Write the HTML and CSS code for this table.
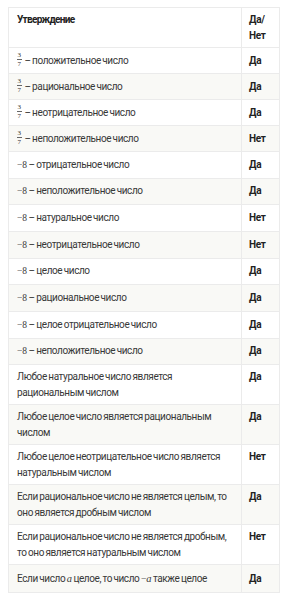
FILE: index.html
```html
<!DOCTYPE html>
<html lang="ru">
<head>
<meta charset="utf-8">
<link rel="stylesheet" href="styles.css">
</head>
<body>
<table class="tbl">
  <colgroup><col class="col1"><col class="col2"></colgroup>
  <thead>
    <tr class="head"><th>Утверждение</th><th class="c2">Да/<br>Нет</th></tr>
  </thead>
  <tbody>
    <tr class="rf"><td><span class="frac"><span class="num">3</span><span class="den">7</span></span> – положительное число</td><td class="c2">Да</td></tr>
    <tr class="rf"><td><span class="frac"><span class="num">3</span><span class="den">7</span></span> – рациональное число</td><td class="c2">Да</td></tr>
    <tr class="rf"><td><span class="frac"><span class="num">3</span><span class="den">7</span></span> – неотрицательное число</td><td class="c2">Да</td></tr>
    <tr class="rf"><td><span class="frac"><span class="num">3</span><span class="den">7</span></span> – неположительное число</td><td class="c2">Нет</td></tr>
    <tr class="rm"><td><span class="m">−8</span> – отрицательное число</td><td class="c2">Да</td></tr>
    <tr class="rm"><td><span class="m">−8</span> – неположительное число</td><td class="c2">Да</td></tr>
    <tr class="rm"><td><span class="m">−8</span> – натуральное число</td><td class="c2">Нет</td></tr>
    <tr class="rm"><td><span class="m">−8</span> – неотрицательное число</td><td class="c2">Нет</td></tr>
    <tr class="rm"><td><span class="m">−8</span> – целое число</td><td class="c2">Да</td></tr>
    <tr class="rm"><td><span class="m">−8</span> – рациональное число</td><td class="c2">Да</td></tr>
    <tr class="rm"><td><span class="m">−8</span> – целое отрицательное число</td><td class="c2">Да</td></tr>
    <tr class="rm"><td><span class="m">−8</span> – неположительное число</td><td class="c2">Да</td></tr>
    <tr class="rd"><td>Любое натуральное число является<br>рациональным числом</td><td class="c2">Да</td></tr>
    <tr class="rd"><td>Любое целое число является рациональным<br>числом</td><td class="c2">Да</td></tr>
    <tr class="rd"><td>Любое целое неотрицательное число является<br>натуральным числом</td><td class="c2">Нет</td></tr>
    <tr class="rd"><td>Если рациональное число не является целым, то<br>оно является дробным числом</td><td class="c2">Да</td></tr>
    <tr class="rd"><td>Если рациональное число не является дробным,<br>то оно является натуральным числом</td><td class="c2">Нет</td></tr>
    <tr class="rl"><td>Если число <span class="mi">a</span> целое, то число <span class="m">−<span class="mi">a</span></span> также целое</td><td class="c2">Да</td></tr>
  </tbody>
</table>
</body>
</html>
```

FILE: styles.css
```css
html, body {
  margin: 0;
  padding: 0;
  background: #ffffff;
}
body {
  padding: 7px 8px;
  font-family: Roboto, "Liberation Sans", Arial, sans-serif;
  font-size: 10px;
  line-height: 16px;
  letter-spacing: -0.4px;
  word-spacing: -0.6px;
  color: #383838;
}
.tbl {
  width: 272px;
  border-collapse: collapse;
  table-layout: fixed;
}
.col2 { width: 38px; }
.tbl th, .tbl td {
  border: 1px solid #ebebeb;
  padding: 4px 4px 3px 8px;
  text-align: left;
  vertical-align: top;
  white-space: nowrap;
}
.tbl th {
  font-weight: 700;
  color: #222222;
  letter-spacing: -0.7px;
}
.tbl .c2 {
  padding-left: 7px;
  padding-right: 2px;
  font-weight: 700;
  color: #222222;
  letter-spacing: -0.3px;
}
.head { height: 40px; }
.rf { height: 26px; }
.rm { height: 26.67px; }
.rd { height: 40px; }
.rl { height: 28px; }
.rf td, .rm td, .rl td {
  vertical-align: middle;
  padding-top: 0;
  padding-bottom: 0;
}
tbody tr:nth-child(even) { background: #f9f9f6; }
.frac {
  display: inline-flex;
  flex-direction: column;
  align-items: center;
  vertical-align: 6.5px;
  font-family: "Liberation Serif", serif;
  font-size: 7px;
  line-height: 6.5px;
  letter-spacing: 0;
  margin-right: 1.5px;
  color: #333333;
}
.num {
  border-bottom: 0.7px solid #666666;
  padding: 0 0.5px 0.5px;
}
.den {
  padding-top: 0.5px;
}
.m {
  font-family: "Liberation Serif", serif;
  font-size: 9.5px;
  letter-spacing: 0;
}
.mi {
  font-family: "Liberation Serif", serif;
  font-style: italic;
  font-size: 10.5px;
  letter-spacing: 0;
}
```
